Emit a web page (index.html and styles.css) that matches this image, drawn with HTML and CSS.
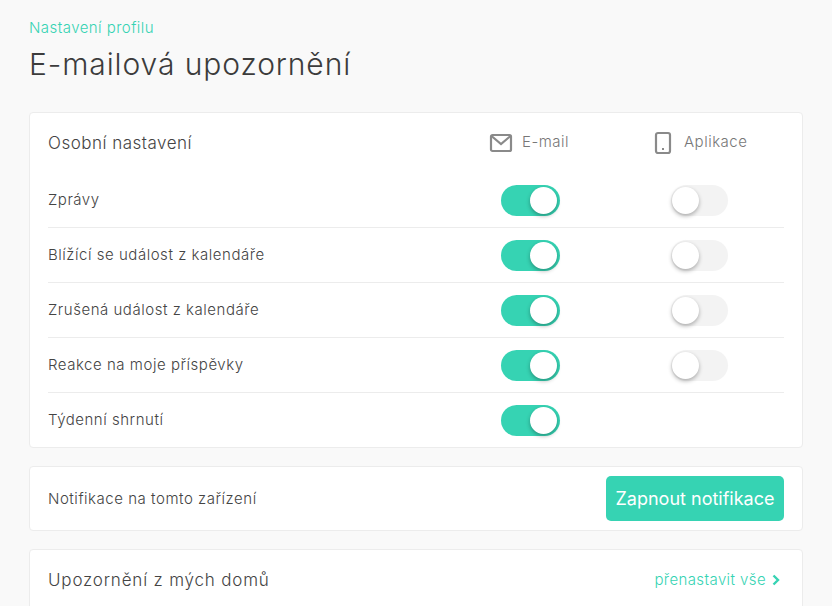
FILE: index.html
```html
<!DOCTYPE html>
<html lang="cs">
<head>
    <meta charset="UTF-8">
    <meta name="viewport" content="width=device-width, initial-scale=1.0">
    <title>E-mailová upozornění</title>
    <link rel="stylesheet" href="styles.css">
</head>
<body>
    <div class="container">
        <a class="breadcrumb" href="#">Nastavení profilu</a>
        <h1>E-mailová upozornění</h1>

        <div class="card settings">
            <div class="row head">
                <h2>Osobní nastavení</h2>
                <div class="col col-email">
                    <svg width="24" height="20" viewBox="0 0 24 20" fill="none" stroke="#8a8a8a" stroke-width="2.2"><rect x="2" y="2" width="20" height="16" rx="1.5"/><path d="M2.500 3l9.500 8 9.500-8"/></svg>
                    <span>E-mail</span>
                </div>
                <div class="col col-app">
                    <svg width="18" height="24" viewBox="0 0 18 24" fill="none" stroke="#8a8a8a" stroke-width="2.2"><rect x="2" y="2" width="14" height="20" rx="2"/><rect x="8" y="17" width="2" height="2" fill="#8a8a8a" stroke="none"/></svg>
                    <span>Aplikace</span>
                </div>
            </div>
            <div class="row item">
                <span class="label">Zprávy</span>
                <div class="cell cell-email"><span class="toggle on"></span></div>
                <div class="cell cell-app"><span class="toggle"></span></div>
            </div>
            <div class="row item">
                <span class="label">Blížící se událost z kalendáře</span>
                <div class="cell cell-email"><span class="toggle on"></span></div>
                <div class="cell cell-app"><span class="toggle"></span></div>
            </div>
            <div class="row item">
                <span class="label">Zrušená událost z kalendáře</span>
                <div class="cell cell-email"><span class="toggle on"></span></div>
                <div class="cell cell-app"><span class="toggle"></span></div>
            </div>
            <div class="row item">
                <span class="label">Reakce na moje příspěvky</span>
                <div class="cell cell-email"><span class="toggle on"></span></div>
                <div class="cell cell-app"><span class="toggle"></span></div>
            </div>
            <div class="row item">
                <span class="label">Týdenní shrnutí</span>
                <div class="cell cell-email"><span class="toggle on"></span></div>
                <div class="cell cell-app"></div>
            </div>
        </div>

        <div class="card device">
            <span class="label">Notifikace na tomto zařízení</span>
            <button type="button">Zapnout notifikace</button>
        </div>

        <div class="card houses">
            <h2>Upozornění z mých domů</h2>
            <a class="reset" href="#">přenastavit vše
                <svg width="8" height="12" viewBox="0 0 8 12" fill="none" stroke="#36d3b3" stroke-width="2.4"><path d="M1.500 1.500L6 6l-4.500 4.500"/></svg>
            </a>
        </div>
    </div>
</body>
</html>
```

FILE: styles.css
```css
html, body {
    height: 606px;
    overflow: hidden;
}
body {
    font-family: Inter, "Open Sans", sans-serif;
    margin: 0;
    background: #f9f9f9;
    color: #444;
}
.container {
    width: 774px;
    margin-left: 29px;
    padding-top: 19px;
}
.breadcrumb {
    display: block;
    font-size: 15px;
    line-height: 18px;
    font-weight: 300;
    letter-spacing: 0.45px;
    color: #36d3b3;
    text-decoration: none;
}
h1 {
    font-size: 30px;
    line-height: 40px;
    font-weight: 300;
    letter-spacing: 0.9px;
    color: #3c3c3c;
    margin: 7px 0 28px;
}
h2 {
    font-size: 17px;
    font-weight: 300;
    letter-spacing: 0.5px;
    color: #444;
    margin: 0;
}
.card {
    background: #fff;
    border: 1px solid #ececec;
    border-radius: 4px;
    margin-bottom: 18px;
    padding: 0 18px;
    box-sizing: border-box;
}
.settings {
    height: 336px;
}
.row {
    display: flex;
    align-items: center;
}
.head {
    height: 60px;
}
.head h2 {
    width: 441px;
}
.col {
    display: flex;
    align-items: center;
    font-size: 15px;
    font-weight: 300;
    letter-spacing: 0.5px;
    color: #777;
}
.col span {
    margin-top: -3px;
}
.col-email {
    width: 165px;
    gap: 9px;
}
.col-app {
    gap: 12px;
}
.item {
    height: 55px;
    border-bottom: 1px solid #ececec;
    box-sizing: border-box;
}
.item:last-child {
    border-bottom: 0;
}
.label {
    font-size: 15px;
    font-weight: 300;
    letter-spacing: 0.53px;
    color: #444;
}
.item .label {
    width: 453px;
    margin-top: -2px;
}
.cell-email {
    width: 170px;
}
.toggle {
    display: block;
    position: relative;
    width: 59px;
    height: 31px;
    border-radius: 16px;
    background: #f3f3f3;
}
.cell-app .toggle {
    width: 57px;
}
.toggle::after {
    content: "";
    position: absolute;
    left: 1px;
    top: 2px;
    width: 27px;
    height: 27px;
    border-radius: 50%;
    background: #fff;
    box-shadow: 0 2px 4px rgba(0, 0, 0, 0.3);
}
.toggle.on {
    background: #36d3b3;
}
.toggle.on::after {
    left: 29px;
}
.device {
    height: 65px;
    display: flex;
    align-items: center;
    justify-content: space-between;
}
button {
    width: 178px;
    height: 45px;
    border: 0;
    border-radius: 5px;
    background: #36d3b3;
    color: #fff;
    font-family: inherit;
    font-size: 18px;
    font-weight: 400;
    padding: 0;
}
.houses {
    height: 80px;
    padding-top: 20px;
    display: flex;
    align-items: flex-start;
    justify-content: space-between;
}
.houses h2 {
    line-height: 20px;
    letter-spacing: 0.82px;
}
.reset {
    display: flex;
    align-items: center;
    gap: 6px;
    margin-right: 4px;
    font-size: 15px;
    line-height: 20px;
    font-weight: 300;
    letter-spacing: 0.4px;
    color: #36d3b3;
    text-decoration: none;
}
```
